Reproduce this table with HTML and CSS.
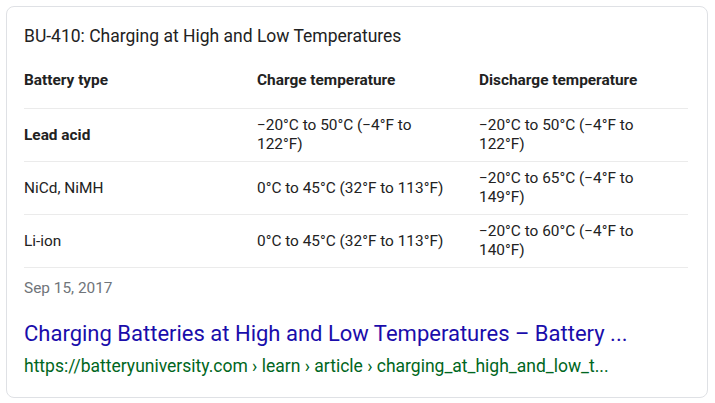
FILE: index.html
```html
<!DOCTYPE html>
<html>
<head>
<meta charset="utf-8">
<link rel="stylesheet" href="styles.css">
</head>
<body>
<div class="card">
  <div class="heading">BU-410: Charging at High and Low Temperatures</div>
  <div class="table">
    <div class="row head">
      <div class="cell th">Battery type</div>
      <div class="cell th">Charge temperature</div>
      <div class="cell th">Discharge temperature</div>
    </div>
    <div class="row">
      <div class="cell th">Lead acid</div>
      <div class="cell">−20°C to 50°C (−4°F to 122°F)</div>
      <div class="cell">−20°C to 50°C (−4°F to 122°F)</div>
    </div>
    <div class="row">
      <div class="cell">NiCd, NiMH</div>
      <div class="cell">0°C to 45°C (32°F to 113°F)</div>
      <div class="cell">−20°C to 65°C (−4°F to 149°F)</div>
    </div>
    <div class="row">
      <div class="cell">Li-ion</div>
      <div class="cell">0°C to 45°C (32°F to 113°F)</div>
      <div class="cell">−20°C to 60°C (−4°F to 140°F)</div>
    </div>
  </div>
  <div class="date">Sep 15, 2017</div>
  <a class="title" href="#">Charging Batteries at High and Low Temperatures – Battery ...</a>
  <div class="url">https://batteryuniversity.com › learn › article › charging_at_high_and_low_t...</div>
</div>
</body>
</html>
```
FILE: styles.css
```css
html, body {
  margin: 0;
  padding: 0;
  background: #fff;
}
body {
  font-family: Roboto, "Liberation Sans", Arial, sans-serif;
  color: #222;
}
.card {
  margin: 6px;
  width: 702px;
  height: 392px;
  box-sizing: border-box;
  border: 1px solid #dfe1e5;
  border-radius: 8px;
  padding: 19px 19px 0 17px;
  display: flex;
  flex-direction: column;
}
.heading {
  font-size: 17.5px;
  line-height: 21px;
  color: #222;
}
.table {
  margin-top: 6px;
  width: 664px;
  display: flex;
  flex-direction: column;
}
.row {
  display: grid;
  grid-template-columns: 233px 222px 1fr;
  align-items: center;
  min-height: 52px;
  border-bottom: 1px solid #ebebeb;
}
.row.head {
  min-height: 55px;
}
.cell {
  font-size: 15.4px;
  line-height: 19px;
  padding-right: 24px;
  color: #222;
}
.th {
  font-weight: bold;
}
.date {
  margin-top: 10px;
  font-size: 15.4px;
  line-height: 20px;
  color: #70757a;
}
.title {
  margin-top: 22px;
  font-size: 22px;
  line-height: 27px;
  color: #1a0dab;
  text-decoration: none;
}
.url {
  margin-top: 8px;
  font-size: 17.5px;
  line-height: 22px;
  color: #006621;
}
```
